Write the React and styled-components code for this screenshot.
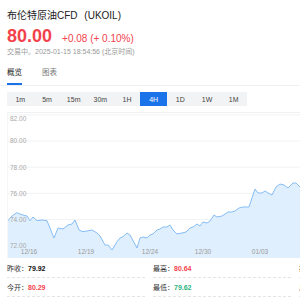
import React from "react";
import styled, { createGlobalStyle } from "styled-components";

const GlobalStyle = createGlobalStyle`
  html, body {
    margin: 0;
    padding: 0;
    background: #fff;
    overflow: hidden;
  }
  body {
    font-family: "Liberation Sans", "Noto Sans CJK SC", sans-serif;
    color: #222;
  }
`;

const RED = "#f2424c";
const GREEN = "#2bb580";
const BLUE = "#1a73e8";

const Page = styled.div`
  width: 430px;
  padding: 9px 7px 0;
  display: flex;
  flex-direction: column;
`;

const Title = styled.div`
  font-size: 10px;
  line-height: 14px;
  color: #222;
  white-space: nowrap;
  span {
    margin-left: 4px;
  }
`;

const PriceRow = styled.div`
  margin-top: 2px;
  display: flex;
  align-items: baseline;
  gap: 10px;
`;

const Price = styled.div`
  font-size: 18px;
  line-height: 22px;
  font-weight: 700;
  color: ${RED};
`;

const Change = styled.div`
  font-size: 10px;
  color: ${RED};
`;

const Status = styled.div`
  font-size: 7px;
  line-height: 10px;
  color: #999;
  white-space: nowrap;
`;

const TabBar = styled.div`
  margin-top: 11px;
  display: flex;
  gap: 20px;
  border-bottom: 1px solid #eef0f3;
  margin-left: -7px;
  padding-left: 7px;
`;

const Tab = styled.div`
  font-size: 7.5px;
  line-height: 10px;
  padding-bottom: 5px;
  color: ${(p) => (p.$active ? "#222" : "#777")};
  border-bottom: 2px solid ${(p) => (p.$active ? BLUE : "transparent")};
`;

const Segments = styled.div`
  margin-top: 6px;
  width: 240px;
  display: grid;
  grid-template-columns: repeat(9, 1fr);
  background: #f2f3f5;
`;

const Segment = styled.div`
  height: 14px;
  display: flex;
  align-items: center;
  justify-content: center;
  font-size: 7px;
  color: ${(p) => (p.$active ? "#fff" : "#444")};
  background: ${(p) => (p.$active ? BLUE : "transparent")};
`;

const ChartBox = styled.div`
  margin-top: 6px;
  height: 146px;
  border-top: 1px solid #f0f1f3;
  border-left: 1px solid #f4f5f7;
  box-sizing: border-box;
  svg {
    display: block;
  }
`;

const Stats = styled.div`
  margin-top: 1px;
  display: grid;
  grid-template-columns: repeat(3, 138px);
  column-gap: 8px;
`;

const StatRow = styled.div`
  padding: 5px 0 3px;
  font-size: 7px;
  line-height: 10px;
  color: #333;
  border-bottom: 1px dashed #e3e5e8;
  white-space: nowrap;
`;

const Value = styled.span`
  font-weight: 700;
  color: ${(p) => p.$color || "#111"};
`;

const points = [
  [7, 221.7], [12, 216], [16.7, 212.7], [20, 214], [23, 215], [27, 216], [30, 220.7],
  [33, 217], [37, 220.7], [42, 220], [47, 220.7], [54, 238], [58, 228], [63, 229],
  [68, 225], [72, 224], [75, 220], [79, 230], [83, 231.7], [87, 231], [92, 230],
  [97, 233], [100, 236], [105, 245], [108, 245], [112, 250], [117, 241.7], [120, 238],
  [123, 236.7], [127, 233], [130, 235], [137, 248], [140, 238], [143, 237], [147, 238],
  [150, 235], [153, 234], [157, 230], [160, 229], [163, 227], [167, 227], [170, 225],
  [173, 230], [177, 234], [182, 233], [186, 232], [190, 228], [193, 227], [197, 224],
  [200, 226], [203, 222], [207, 223], [210, 221], [214, 215], [217, 217], [222, 216],
  [228, 212], [232, 212], [235, 211], [239, 208], [243, 207], [249, 207], [255, 189],
  [258, 193], [262, 193], [265, 191], [268, 193], [272, 195], [276, 187], [280, 184],
  [284, 185], [288, 188], [293, 183], [296, 183], [300, 187], [305, 191], [310, 186],
  [318, 189], [326, 185], [335, 188], [345, 184], [360, 186], [380, 183], [400, 185], [423, 184],
];

const grid = [
  { y: 114.8, label: "82.00", ly: 118.3 },
  { y: 141, label: "80.00" },
  { y: 167.2, label: "78.00" },
  { y: 193.4, label: "76.00" },
  { y: 219.6, label: "74.00" },
  { y: 245.8, label: "72.00" },
];

const dates = [
  [29, "12/16"], [86, "12/19"], [150, "12/24"], [203, "12/30"], [260, "01/03"],
];

function Chart() {
  const line = points.map(([x, y]) => `${x},${y}`).join(" ");
  const area = `M7,258 L${line.replace(/ /g, " L")} L423,258 Z`;
  return (
    <ChartBox>
      <svg width="416" height="145" viewBox="8 113 416 145">
        {grid.map((g) => (
          <line key={g.label} x1="8" x2="424" y1={g.y} y2={g.y} stroke="#f1f2f4" strokeWidth="1" />
        ))}
        <path d={area} fill="#e0effd" />
        <polyline points={line} fill="none" stroke="#86bdf5" strokeWidth="1" strokeLinejoin="round" />
        {grid.map((g) => (
          <text key={g.label} x="10" y={(g.ly || g.y) + 2.3} fontSize="6.5" fill="#a8a8a8" fontFamily="Liberation Sans, sans-serif">
            {g.label}
          </text>
        ))}
        {dates.map(([x, d]) => (
          <text key={d} x={x} y="253.5" fontSize="6.5" fill="#999" textAnchor="middle" fontFamily="Liberation Sans, sans-serif">
            {d}
          </text>
        ))}
      </svg>
    </ChartBox>
  );
}

const periods = ["1m", "5m", "15m", "30m", "1H", "4H", "1D", "1W", "1M"];

export default function App() {
  return (
    <>
      <GlobalStyle />
      <Page>
        <Title>
          布伦特原油CFD <span>(UKOIL)</span>
        </Title>
        <PriceRow>
          <Price>80.00</Price>
          <Change>+0.08 (+ 0.10%)</Change>
        </PriceRow>
        <Status>交易中。2025-01-15 18:54:56 (北京时间)</Status>
        <TabBar>
          <Tab $active>概览</Tab>
          <Tab>图表</Tab>
        </TabBar>
        <Segments>
          {periods.map((p) => (
            <Segment key={p} $active={p === "4H"}>
              {p}
            </Segment>
          ))}
        </Segments>
        <Chart />
        <Stats>
          <StatRow>
            昨收：<Value>79.92</Value>
          </StatRow>
          <StatRow>
            最高：<Value $color={RED}>80.64</Value>
          </StatRow>
          <StatRow>
            振幅：<Value>1.28%</Value>
          </StatRow>
          <StatRow>
            今开：<Value $color={RED}>80.29</Value>
          </StatRow>
          <StatRow>
            最低：<Value $color={GREEN}>79.62</Value>
          </StatRow>
          <StatRow>
            总量：<Value>--</Value>
          </StatRow>
        </Stats>
      </Page>
    </>
  );
}
